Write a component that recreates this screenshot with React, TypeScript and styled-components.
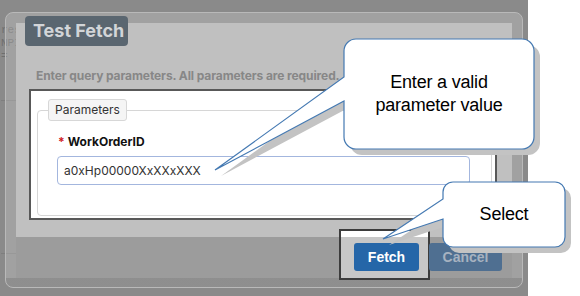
import React from 'react';
import styled, { createGlobalStyle } from 'styled-components';

const GlobalStyle = createGlobalStyle`
  html, body {
    margin: 0;
    padding: 0;
    background: #ffffff;
    overflow: hidden;
  }
`;

const Root = styled.div`
  position: relative;
  display: flex;
  width: 580px;
  height: 296px;
  font-family: Inter, 'Liberation Sans', sans-serif;
`;

// the dimmed page underneath the modal
const Backdrop = styled.div`
  width: 528px;
  height: 296px;
  background: #8a8a8a;
  overflow: hidden;
`;

const PageBehind = styled.div`
  padding: 24px 0 0 1px;
  display: flex;
  flex-direction: column;
  font-family: 'Liberation Mono', monospace;
  font-size: 11px;
  line-height: 13px;
  color: #6e6e6e;
`;

const BehindRule = styled.div`
  width: 20px;
  height: 1px;
  margin-top: ${(p: { $gap: number }) => p.$gap}px;
  background: #7e7e7e;
`;

const WhiteSide = styled.div`
  flex: 1;
  background: #ffffff;
`;

// modal sits over the page
const Modal = styled.div`
  position: absolute;
  left: 5px;
  top: 12px;
  width: 518px;
  height: 276px;
  box-sizing: border-box;
  border: 1px solid #b9b9b9;
  border-radius: 8px;
  background: linear-gradient(
    to bottom,
    rgba(255, 255, 255, 0.2) 0,
    rgba(255, 255, 255, 0.2) 265px,
    rgba(255, 255, 255, 0.04) 265px
  );
  display: flex;
  flex-direction: column;
`;

const Panel = styled.div`
  margin: 10px 10px 0 10px;
  height: 214px;
  background: #c0c0c0;
  display: flex;
  flex-direction: column;
`;

const TitleTab = styled.div`
  align-self: flex-start;
  margin: -7px 0 0 9px;
  width: 103px;
  height: 30px;
  box-sizing: border-box;
  border-radius: 4px;
  background: #5a6670;
  color: #d2d5d8;
  font-size: 18px;
  font-weight: 700;
  line-height: 30px;
  padding-left: 8px;
  white-space: nowrap;
`;

const Intro = styled.div`
  margin: 22px 0 0 20px;
  font-size: 12px;
  font-weight: 700;
  line-height: 16px;
  letter-spacing: -0.1px;
  color: #878787;
  white-space: nowrap;
`;

const Body = styled.div`
  margin: 5px 0 0 13px;
  width: 468px;
  height: 131px;
  box-sizing: border-box;
  border: 2px solid #585858;
  background: #ffffff;
  display: flex;
  flex-direction: column;
`;

const Fieldset = styled.fieldset`
  margin: 8px 3px 0 6px;
  padding: 0 21px 30px 19px;
  border: 1px solid #d6d6d6;
  border-radius: 4px;
  min-width: 0;
`;

const Legend = styled.legend`
  margin-left: -9px;
  height: 22px;
  box-sizing: border-box;
  padding: 0 6px;
  border: 1px solid #d7d7d7;
  border-radius: 3px;
  background: #f5f5f5;
  font-size: 12px;
  line-height: 20px;
  color: #333333;
`;

const Label = styled.div`
  margin: 13px 0 6px 1px;
  font-size: 12px;
  font-weight: 700;
  line-height: 16px;
  color: #111111;
`;

const Req = styled.span`
  color: #d0201f;
  margin-right: 3px;
`;

const Input = styled.input`
  display: block;
  width: 100%;
  height: 29px;
  box-sizing: border-box;
  padding: 0 6px;
  border: 1px solid #a3b6de;
  border-radius: 4px;
  background: #ffffff;
  font-family: Inter, 'Liberation Sans', sans-serif;
  font-size: 12px;
  color: #333333;
  outline: none;
`;

const Footer = styled.div`
  position: relative;
  margin: 0 10px;
  height: 41px;
  box-sizing: border-box;
  padding: 6px 10px 0 0;
  background: #9c9c9c;
  display: flex;
  justify-content: flex-end;
  gap: 10px;
`;

const Highlight = styled.div`
  position: absolute;
  left: 323px;
  top: -8px;
  width: 91px;
  height: 51px;
  box-sizing: border-box;
  border: 2px solid #3c3c3c;
  background: linear-gradient(to bottom, #ffffff 0, #ffffff 6px, #c7c7c7 6px);
`;

const Button = styled.button`
  position: relative;
  width: ${(p: { $primary?: boolean }) => (p.$primary ? '65px' : '73px')};
  height: 28px;
  border: none;
  border-radius: 3px;
  background: ${(p: { $primary?: boolean }) => (p.$primary ? '#2566a8' : '#4f6f91')};
  color: ${(p: { $primary?: boolean }) => (p.$primary ? '#ffffff' : '#a6b2c0')};
  font-family: 'Liberation Sans', Arial, sans-serif;
  font-size: 14px;
  font-weight: 700;
  padding: 0;
`;

// callout bubbles drawn over everything
const CalloutWrap = styled.div`
  position: absolute;
  display: flex;
  align-items: center;
  justify-content: center;
`;

const CalloutSvg = styled.svg`
  position: absolute;
  left: 0;
  top: 0;
  overflow: visible;
`;

const CalloutText = styled.div`
  position: relative;
  font-family: 'Liberation Sans', Arial, sans-serif;
  font-size: 18px;
  line-height: 23px;
  letter-spacing: -0.2px;
  color: #000000;
  text-align: center;
`;

type CalloutProps = {
  x: number;
  y: number;
  w: number;
  h: number;
  r: number;
  t1: number;
  t2: number;
  tip: [number, number];
  children: React.ReactNode;
};

const bubblePath = ({ w, h, r, t1, t2, tip }: CalloutProps) =>
  `M ${r} 0 H ${w - r} A ${r} ${r} 0 0 1 ${w} ${r} V ${h - r} ` +
  `A ${r} ${r} 0 0 1 ${w - r} ${h} H ${r} A ${r} ${r} 0 0 1 0 ${h - r} ` +
  `V ${t2} L ${tip[0]} ${tip[1]} L 0 ${t1} V ${r} A ${r} ${r} 0 0 1 ${r} 0 Z`;

const Callout = (props: CalloutProps) => {
  const d = bubblePath(props);
  return (
    <CalloutWrap style={{ left: props.x, top: props.y, width: props.w, height: props.h }}>
      <CalloutSvg width={props.w} height={props.h}>
        <path d={d} fill='#c3c3c3' transform='translate(6 6)' />
        <path d={d} fill='#ffffff' stroke='#4479b2' strokeWidth='1.2' />
      </CalloutSvg>
      <CalloutText>{props.children}</CalloutText>
    </CalloutWrap>
  );
};

const App = () => {
  return (
    <Root>
      <GlobalStyle />
      <Backdrop>
        <PageBehind>
          <span>res</span>
          <span>NPI</span>
          <span>= '</span>
          <BehindRule $gap={37} />
          <BehindRule $gap={152} />
        </PageBehind>
      </Backdrop>
      <WhiteSide />

      <Modal>
        <Panel>
          <TitleTab>Test Fetch</TitleTab>
          <Intro>Enter query parameters. All parameters are required.</Intro>
          <Body>
            <Fieldset>
              <Legend>Parameters</Legend>
              <Label>
                <Req>*</Req>WorkOrderID
              </Label>
              <Input value='a0xHp00000XxXXxXXX' readOnly />
            </Fieldset>
          </Body>
        </Panel>
        <Footer>
          <Highlight />
          <Button $primary>Fetch</Button>
          <Button>Cancel</Button>
        </Footer>
      </Modal>

      <Callout x={344} y={39} w={190} h={110} r={12} t1={38} t2={62} tip={[-129, 131]}>
        Enter a valid
        <br />
        parameter value
      </Callout>
      <Callout x={443} y={182} w={122} h={65} r={10} t1={17} t2={37} tip={[-60, 57]}>
        Select
      </Callout>
    </Root>
  );
};

export default App;
